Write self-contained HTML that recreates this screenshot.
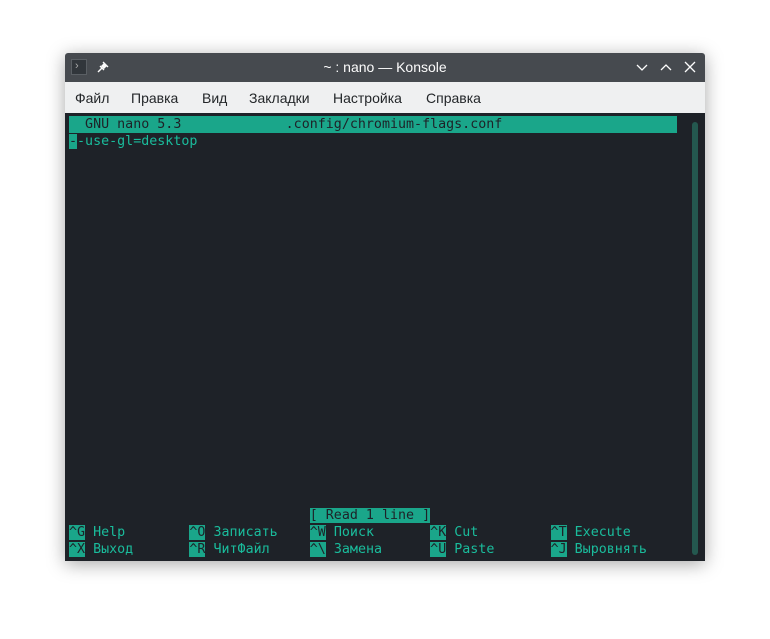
<!DOCTYPE html>
<html><head><meta charset="utf-8"><style>
body{margin:0;width:770px;height:639px;background:#fff;position:relative;overflow:hidden;font-family:"Liberation Sans","DejaVu Sans",sans-serif}
.win{position:absolute;left:65px;top:53px;width:640px;height:508px;box-shadow:0 3px 18px rgba(0,0,0,.35);border-radius:3px 3px 0 0;overflow:hidden}
.title{position:absolute;left:0;top:0;width:640px;height:29px;background:#464a4f;color:#fcfcfc;font-size:14px}
.menu{position:absolute;left:0;top:29px;width:640px;height:31px;background:#eff0f1;color:#232629;font-size:14px}
.menu span{position:absolute;top:8px}
.term{position:absolute;left:0;top:60px;width:640px;height:448px;background:#1e2228}
.r{position:absolute;left:4px;height:17px;line-height:17px;font-family:"DejaVu Sans Mono","Liberation Mono",monospace;font-size:13.33px;color:#1abc9c;white-space:pre}
.h{background:#1aa68a;color:#1e2228}
.sb{position:absolute;left:627px;top:9px;width:6px;height:433px;border-radius:3px;background:#24584f}
</style></head><body>
<div class="win">
 <div class="title">
  <div style="position:absolute;left:6px;top:6px;width:16px;height:16px;background:#31363b;border:1px solid #5a5f64;box-sizing:border-box"></div>
  <div style="position:absolute;left:10px;top:7px;color:#aaa;font-size:11px">›</div>
  <svg style="position:absolute;left:31px;top:7px" width="14" height="14" fill="#fcfcfc" stroke="#fcfcfc" stroke-width="1.4">
   <path d="M2 12l4-4"/><path d="M5 6l3-3 3 3-3 3z" stroke="none"/><path d="M4 6l4 4M7 2l5 5"/>
  </svg>
  <div style="position:absolute;left:0;width:640px;top:6px;text-align:center">~ : nano — Konsole</div>
  <svg style="position:absolute;left:570px;top:8px" width="64" height="14" stroke="#fcfcfc" stroke-width="1.3" fill="none">
   <path d="M2 4l5 5 5-5"/><path d="M26 9l5-5 5 5"/><path d="M50 1l10 10M60 1l-10 10"/>
  </svg>
 </div>
 <div class="menu">
  <span style="left:10px">Файл</span><span style="left:66px">Правка</span><span style="left:137px">Вид</span><span style="left:184px">Закладки</span><span style="left:268px">Настройка</span><span style="left:361px">Справка</span>
 </div>
 <div class="term">
  <div class="r h" style="top:3px;width:608px">  GNU nano 5.3             .config/chromium-flags.conf</div>
  <div class="r" style="top:20px"><span class="h">-</span>-use-gl=desktop</div>
  <div class="r" style="top:394px">                              <span class="h">[ Read 1 line ]</span></div>
  <div class="r" style="top:411px"><span class="h">^G</span> Help        <span class="h">^O</span> Записать    <span class="h">^W</span> Поиск       <span class="h">^K</span> Cut         <span class="h">^T</span> Execute</div>
  <div class="r" style="top:428px"><span class="h">^X</span> Выход       <span class="h">^R</span> ЧитФайл     <span class="h">^\</span> Замена      <span class="h">^U</span> Paste       <span class="h">^J</span> Выровнять</div>
  <div class="sb"></div>
 </div>
</div>
</body></html>
